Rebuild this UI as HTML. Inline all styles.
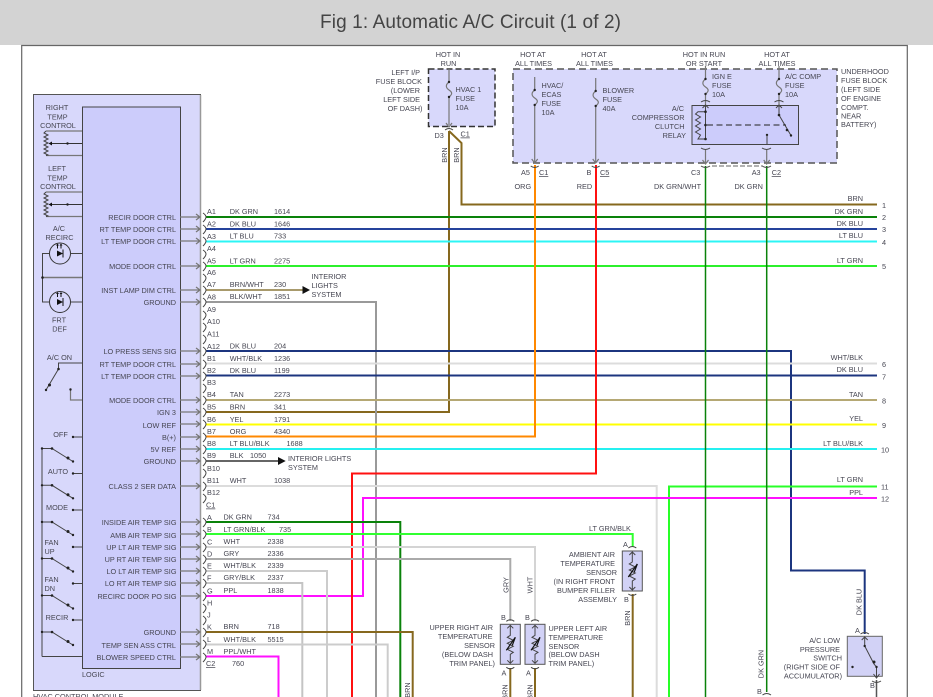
<!DOCTYPE html>
<html><head><meta charset="utf-8"><style>
html,body{margin:0;padding:0;background:#fff;width:933px;height:697px;overflow:hidden}
svg{display:block;filter:blur(.3px)}
text{font-family:"Liberation Sans",sans-serif;font-size:7.3px;fill:#464652}
.m{text-anchor:middle}.e{text-anchor:end}
.w{fill:none;stroke-width:2}
.l{fill:none;stroke:#444;stroke-width:1}
.g{fill:none;stroke:#777;stroke-width:1.2}
.d{fill:#222}
</style></head><body>
<svg width="933" height="697" viewBox="0 0 933 697" xmlns="http://www.w3.org/2000/svg">
<defs>
<g id="c"><path class="g" d="M-23 0H-4M-7-3L-3 0-7 3"/><path class="l" d="M0-4Q3-2 3 0T0 5" stroke="#555"/></g>
<path id="k" class="l" d="M-3-4Q0-2 0 0T-3 5"/>
<g id="fu"><path class="g" d="M0 0V13C-4 16-3 19 0 21S4 25 0 28V41"/><circle cx="0" cy="13" r="1.2" class="d"/><circle cx="0" cy="28" r="1.2" class="d"/></g>
<g id="sw"><path class="l" d="M0 0H10L26 10 31 13"/><circle cx="10" cy="0" r="1.3" class="d"/><circle cx="26" cy="9.5" r="1.5" class="d"/><circle cx="31" cy="13" r="1.2" class="d"/><circle cx="0" cy="0" r="1.2" class="d"/></g>
<g id="ts"><rect x="-10" y="0" width="20" height="40" fill="#d2d2f6" stroke="#555" stroke-width="1"/><path class="l" d="M0 1V11L-3 13 3 16-3 19 3 22-3 25 3 28 0 30V39M-3 4L0 1 3 4M-3 36L0 39 3 36"/><path d="M-4 26L5 13" stroke="#111" stroke-width="1.2"/><path d="M5 13L2 21" stroke="#111" stroke-width="1.2"/><path class="l" d="M-4-3Q0-6 4-3M-4 43Q0 46 4 43"/></g>
<g id="led"><circle r="10.5" fill="none" stroke="#333" stroke-width="1"/><path d="M-3-3V3L3 0Z" fill="#111"/><path d="M3-4V4" stroke="#111"/><path d="M-2.500-5V-9M1-5V-9" stroke="#111"/><path d="M-4-8L-2.500-10-1-8M-.5-8L1-10 2.500-8" fill="#111"/></g>
<g id="pot"><path class="g" d="M46 0H82M46 24.500H82"/><path class="l" d="M46 0L44 2 48 4 44 6 48 8 44 10 48 12 44 14 48 16 44 18 48 20 44 22 48 24 46 24.500"/><path d="M50 12.500H82" stroke="#333"/><path d="M48.500 12.500L52 10.500V14.500Z" fill="#111"/><circle cx="67.500" cy="12.500" r="1.200" class="d"/></g>
</defs>
<rect width="933" height="697" fill="#fff"/>
<rect width="933" height="45" fill="#d3d3d3"/>
<text x="320" y="28" textLength="301" lengthAdjust="spacing" style="font-size:19px;fill:#444">Fig 1: Automatic A/C Circuit (1 of 2)</text>
<path d="M21.700 697V45.500H907.300V697" fill="none" stroke="#666" stroke-width="1.200"/>

<!-- module -->
<rect x="33.500" y="94.500" width="167" height="596" fill="#d8d8fb" stroke="#555" stroke-width="1"/>
<path d="M200.500 95V690" stroke="#999" stroke-width="1.500"/>
<rect x="82.500" y="107" width="98" height="561.500" fill="#ccccfb" stroke="#444" stroke-width="1"/>

<!-- fuse blocks -->
<rect x="428.500" y="69" width="66.500" height="57.500" fill="#d8d8fb" stroke="#333" stroke-width="1.500" stroke-dasharray="6 3"/>
<rect x="513" y="69" width="324" height="94" fill="#d8d8fb" stroke="#555" stroke-width="1.500" stroke-dasharray="7 4"/>
<rect x="692" y="105.500" width="106.500" height="39" fill="#ccccfb" stroke="#444" stroke-width="1"/>

<!-- wires -->
<g class="w">
<path stroke="#86681e" d="M449 131V412H206M449 131L461.500 143V204.500H877"/>
<path stroke="#0a820a" d="M206 217H877"/>
<path stroke="#25439c" d="M206 229H877"/>
<path stroke="#2cf5f5" d="M206 241.500H877"/>
<path stroke="#2cf02c" d="M206 266H877"/>
<path stroke="#a89a6c" d="M206 290H303"/>
<path stroke="#999" d="M206 302H376V697"/>
<path stroke="#1c357f" d="M206 351H791V570.500H864.700V634"/>
<path stroke="#dcdcdc" d="M206 363.500H877"/>
<path stroke="#1c357f" d="M206 375.500H877"/>
<path stroke="#b5a874" d="M206 400H877"/>
<path stroke="#ffff00" d="M206 424.500H877"/>
<path stroke="#ff8800" d="M206 436.500H535V165"/>
<path stroke="#25f0f0" d="M206 449H877"/>
<path stroke="#666" d="M206 461H280"/>
<path stroke="#dcdcdc" d="M206 486H656.700V697"/>
<path stroke="#28ff28" d="M669 697V486.500H877"/>
<path stroke="#ff10ff" d="M206 596H363V498H877"/>
<path stroke="#ff1010" d="M352 697V473.500H596V165"/>
<path stroke="#0a820a" d="M206 522H400.300V697"/>
<path stroke="#30ff30" d="M206 534H632.700V547"/>
<path stroke="#d4d4d4" d="M206 547H535V621"/>
<path stroke="#aaa" d="M206 559H510.300V621"/>
<path stroke="#ccc" d="M206 571H327V697"/>
<path stroke="#c4c4c4" d="M206 583H302.300V697"/>
<path stroke="#86681e" d="M206 632H412.700V697"/>
<path stroke="#ccc" d="M206 644.500H387.700V697"/>
<path stroke="#ff10ff" d="M206 656.500H278.500V697"/>
<path stroke="#86681e" d="M632.700 594V697M510.300 668V697M535 668V697"/>
<path stroke="#0a820a" stroke-width="1.500" d="M705.500 166V697M766.700 166V692"/>
<path stroke="#555" stroke-width="1.500" d="M876.500 680V697"/>
</g>
<path d="M302.500 286L310 290 302.500 294ZM278 457L285.700 461 278 465Z" fill="#111"/>

<!-- pin connectors -->
<use href="#c" x="203" y="217"/><use href="#c" x="203" y="229"/><use href="#c" x="203" y="241"/><use href="#k" x="206" y="254"/><use href="#c" x="203" y="266"/><use href="#k" x="206" y="278"/><use href="#c" x="203" y="290"/><use href="#c" x="203" y="302"/><use href="#k" x="206" y="315"/><use href="#k" x="206" y="327"/><use href="#k" x="206" y="339"/><use href="#c" x="203" y="351"/><use href="#c" x="203" y="364"/><use href="#c" x="203" y="376"/><use href="#k" x="206" y="388"/><use href="#c" x="203" y="400"/><use href="#c" x="203" y="412"/><use href="#c" x="203" y="424"/><use href="#c" x="203" y="437"/><use href="#c" x="203" y="449"/><use href="#c" x="203" y="461"/><use href="#k" x="206" y="473"/><use href="#c" x="203" y="486"/><use href="#k" x="206" y="498"/><use href="#c" x="203" y="522"/><use href="#c" x="203" y="534"/><use href="#c" x="203" y="547"/><use href="#c" x="203" y="559"/><use href="#c" x="203" y="571"/><use href="#c" x="203" y="583"/><use href="#c" x="203" y="596"/><use href="#k" x="206" y="608"/><use href="#k" x="206" y="620"/><use href="#c" x="203" y="632"/><use href="#c" x="203" y="644"/><use href="#c" x="203" y="657"/>

<!-- left controls -->
<use href="#pot" x="0" y="131"/><use href="#pot" x="0" y="192"/>
<use href="#led" x="60" y="253.500"/><use href="#led" x="60" y="302"/>
<path class="l" d="M49.500 253.500H42.500V302H49.500M70.500 253.500H82M70.500 302H82"/>
<path d="M42.500 277.500H82" stroke="#777" stroke-width="1.500"/><circle cx="42.500" cy="277.500" r="1.300" class="d"/>
<path class="l" d="M82 363H58.500V369L46 390"/><circle cx="58.500" cy="369" r="1.300" class="d"/><circle cx="49.500" cy="385" r="1.500" class="d"/><circle cx="46" cy="390" r="1.200" class="d"/>
<path class="g" d="M70.500 389.500V400H82"/><circle cx="70.500" cy="389.500" r="1.200" class="d"/>
<path class="l" d="M42 656.500V448.500H52"/><path class="l" d="M42 656.500H82"/>
<use href="#sw" x="42" y="448.500"/><use href="#sw" x="42" y="485.300"/><use href="#sw" x="42" y="522"/><use href="#sw" x="42" y="558.500"/><use href="#sw" x="42" y="595.500"/><use href="#sw" x="42" y="632"/>
<path class="l" d="M73 437H82M73 473.500H82M73 510H82M73 547H82M73 583.500H82M73 620H82"/>
<g class="d"><circle cx="73" cy="437" r="1.200"/><circle cx="73" cy="473.500" r="1.200"/><circle cx="73" cy="510" r="1.200"/><circle cx="73" cy="547" r="1.200"/><circle cx="73" cy="583.500" r="1.200"/><circle cx="73" cy="620" r="1.200"/></g>

<!-- fuses -->
<use href="#fu" x="449" y="69"/><path class="g" d="M449 110V125M446 123L449 127 452 123"/><path class="l" d="M445 130Q449 127 453 130"/>
<use href="#fu" x="534.700" y="77"/><path class="g" d="M534.700 118V162M531.700 159L534.700 163 537.700 159"/><path class="l" d="M530.700 166Q534.700 169 538.700 166"/>
<use href="#fu" x="595.700" y="78"/><path class="g" d="M595.700 119V162M592.700 159L595.700 163 598.700 159"/><path class="l" d="M591.700 166Q595.700 169 599.700 166"/>
<use href="#fu" x="705.500" y="66"/><use href="#fu" x="779" y="66"/>
<path class="l" d="M701 102Q705.500 99 710 102M774.500 102Q779 99 783.500 102M701 148Q705.500 151 710 148M762 148Q766.700 151 771 148"/>
<path class="l" d="M705.500 105V140M702.500 108L705.500 105 708.500 108M776 108L779 105 782 108M779 105V115L791 135.500"/>
<path class="l" d="M705.500 111.700H698L695.500 114 700.500 117 695.500 120 700.500 123 695.500 126 700.500 129 695.500 132 700.500 135 698 139H705.500"/>
<path d="M707 125H786" stroke="#222" stroke-width="1" stroke-dasharray="6 3.500"/>
<g class="d"><circle cx="705.500" cy="111.700" r="1.300"/><circle cx="705.500" cy="125" r="1.300"/><circle cx="705.500" cy="139" r="1.300"/><circle cx="779" cy="115" r="1.300"/><circle cx="787" cy="130" r="1.300"/><circle cx="791" cy="135.500" r="1.200"/><circle cx="767" cy="135" r="1.200"/></g>
<path class="l" d="M767 135V145"/>
<path class="g" d="M705.500 150V163M702.500 160L705.500 164 708.500 160M766.700 150V163M763.700 160L766.700 164 769.700 160"/>
<path class="l" d="M701 166Q705.500 169 710 166M762 166Q766.700 169 771 166"/>
<path d="M712 166H763" stroke="#666" stroke-width="1" stroke-dasharray="5 2"/>

<!-- sensors -->
<use href="#ts" x="632.300" y="551"/><use href="#ts" x="510.300" y="624.300"/><use href="#ts" x="535" y="624.300"/>
<rect x="847.300" y="636.300" width="35" height="40" fill="#d2d2f6" stroke="#666"/>
<path class="l" d="M860.500 634Q864.700 631 869 634M861.700 640L864.700 637 867.700 640M864.700 637V646L874 664 876.500 667V677M873.500 674L876.500 678 879.500 674M872 681Q876.500 684 881 681"/>
<g class="d"><circle cx="864.700" cy="646" r="1.200"/><circle cx="874" cy="662" r="1.500"/><circle cx="876.500" cy="667" r="1.200"/><circle cx="852.500" cy="667" r="1.200"/></g>
<path class="l" d="M762.500 695Q766.700 692 771 695"/>

<!-- text: pin labels -->
<text x="207" y="214">A1</text><text x="207" y="226.500">A2</text><text x="207" y="239">A3</text><text x="207" y="251">A4</text><text x="207" y="263.500">A5</text><text x="207" y="275">A6</text><text x="207" y="287">A7</text><text x="207" y="299.500">A8</text><text x="207" y="312">A9</text><text x="207" y="324">A10</text><text x="207" y="336.500">A11</text><text x="207" y="349">A12</text><text x="207" y="361">B1</text><text x="207" y="373">B2</text><text x="207" y="385">B3</text><text x="207" y="397">B4</text><text x="207" y="409.500">B5</text><text x="207" y="422">B6</text><text x="207" y="434">B7</text><text x="207" y="446">B8</text><text x="207" y="458">B9</text><text x="207" y="471">B10</text><text x="207" y="483">B11</text><text x="207" y="495">B12</text><text x="206" y="507.500" text-decoration="underline">C1</text><text x="207" y="520">A</text><text x="207" y="532">B</text><text x="207" y="544.500">C</text><text x="207" y="556.500">D</text><text x="207" y="568.500">E</text><text x="207" y="580.500">F</text><text x="207" y="593.500">G</text><text x="207" y="605.500">H</text><text x="207" y="617.500">J</text><text x="207" y="629.500">K</text><text x="207" y="642">L</text><text x="207" y="654">M</text><text x="206" y="666" text-decoration="underline">C2</text>

<!-- wire names -->
<text x="229.700" y="214">DK GRN</text><text x="274" y="214">1614</text>
<text x="229.700" y="226.500">DK BLU</text><text x="274" y="226.500">1646</text>
<text x="229.700" y="238.500">LT BLU</text><text x="274" y="238.500">733</text>
<text x="229.700" y="263.500">LT GRN</text><text x="274" y="263.500">2275</text>
<text x="229.700" y="287">BRN/WHT</text><text x="274" y="287">230</text>
<text x="229.700" y="299">BLK/WHT</text><text x="274" y="299">1851</text>
<text x="229.700" y="348.500">DK BLU</text><text x="274" y="348.500">204</text>
<text x="229.700" y="361">WHT/BLK</text><text x="274" y="361">1236</text>
<text x="229.700" y="373">DK BLU</text><text x="274" y="373">1199</text>
<text x="229.700" y="397">TAN</text><text x="274" y="397">2273</text>
<text x="229.700" y="409.500">BRN</text><text x="274" y="409.500">341</text>
<text x="229.700" y="422">YEL</text><text x="274" y="422">1791</text>
<text x="229.700" y="434">ORG</text><text x="274" y="434">4340</text>
<text x="229.700" y="446">LT BLU/BLK</text><text x="286.500" y="446">1688</text>
<text x="229.700" y="458">BLK</text><text x="250" y="458">1050</text>
<text x="229.700" y="483">WHT</text><text x="274" y="483">1038</text>
<text x="223.500" y="519.500">DK GRN</text><text x="267.500" y="519.500">734</text>
<text x="223.500" y="532">LT GRN/BLK</text><text x="279" y="532">735</text>
<text x="223.500" y="544">WHT</text><text x="267.500" y="544">2338</text>
<text x="223.500" y="556">GRY</text><text x="267.500" y="556">2336</text>
<text x="223.500" y="568">WHT/BLK</text><text x="267.500" y="568">2339</text>
<text x="223.500" y="580">GRY/BLK</text><text x="267.500" y="580">2337</text>
<text x="223.500" y="593">PPL</text><text x="267.500" y="593">1838</text>
<text x="223.500" y="629">BRN</text><text x="267.500" y="629">718</text>
<text x="223.500" y="642">WHT/BLK</text><text x="267.500" y="642">5515</text>
<text x="223.500" y="654">PPL/WHT</text><text x="232" y="666">760</text>

<!-- inner labels -->
<g class="e">
<text class="e" x="176" y="220">RECIR DOOR CTRL</text><text class="e" x="176" y="232">RT TEMP DOOR CTRL</text><text class="e" x="176" y="244">LT TEMP DOOR CTRL</text><text class="e" x="176" y="269">MODE DOOR CTRL</text><text class="e" x="176" y="293">INST LAMP DIM CTRL</text><text class="e" x="176" y="305">GROUND</text><text class="e" x="176.500" y="354">LO PRESS SENS SIG</text><text class="e" x="176" y="367">RT TEMP DOOR CTRL</text><text class="e" x="176" y="379">LT TEMP DOOR CTRL</text><text class="e" x="176" y="403">MODE DOOR CTRL</text><text class="e" x="176" y="415">IGN 3</text><text class="e" x="176" y="428">LOW REF</text><text class="e" x="176" y="440">B(+)</text><text class="e" x="176" y="452">5V REF</text><text class="e" x="176" y="464">GROUND</text><text class="e" x="176" y="489">CLASS 2 SER DATA</text><text class="e" x="176.500" y="525">INSIDE AIR TEMP SIG</text><text class="e" x="176.500" y="538">AMB AIR TEMP SIG</text><text class="e" x="176.500" y="550">UP LT AIR TEMP SIG</text><text class="e" x="176.500" y="562">UP RT AIR TEMP SIG</text><text class="e" x="176.500" y="574">LO LT AIR TEMP SIG</text><text class="e" x="176.500" y="586">LO RT AIR TEMP SIG</text><text class="e" x="176.500" y="599">RECIRC DOOR PO SIG</text><text class="e" x="176" y="635">GROUND</text><text class="e" x="176" y="648">TEMP SEN ASS CTRL</text><text class="e" x="176" y="660">BLOWER SPEED CTRL</text>
</g>

<!-- left labels -->
<text class="m" x="57" y="110">RIGHT</text><text class="m" x="57.500" y="119.500">TEMP</text><text class="m" x="58" y="128">CONTROL</text>
<text class="m" x="57" y="171">LEFT</text><text class="m" x="57.500" y="180.500">TEMP</text><text class="m" x="58" y="189">CONTROL</text>
<text class="m" x="59" y="231">A/C</text><text class="m" x="59.500" y="240">RECIRC</text>
<text class="m" x="59" y="322.500">FRT</text><text class="m" x="59.500" y="331.500">DEF</text>
<text class="m" x="59.500" y="360">A/C ON</text><text class="m" x="60.500" y="437">OFF</text><text class="m" x="58" y="474">AUTO</text><text class="m" x="57" y="510">MODE</text>
<text x="44.500" y="545">FAN</text><text x="44.500" y="554">UP</text><text x="44.500" y="582">FAN</text><text x="44.500" y="591">DN</text><text class="m" x="57" y="620">RECIR</text>
<text x="82" y="677">LOGIC</text><text x="33" y="699">HVAC CONTROL MODULE</text>

<!-- interior -->
<text x="311.500" y="279">INTERIOR</text><text x="311.500" y="288">LIGHTS</text><text x="311.500" y="297">SYSTEM</text>
<text x="288" y="461">INTERIOR LIGHTS</text><text x="288" y="470">SYSTEM</text>

<!-- top labels -->
<text class="m" x="448" y="57">HOT IN</text><text class="m" x="448.500" y="66">RUN</text>
<text class="m" x="533" y="57">HOT AT</text><text class="m" x="533.500" y="66">ALL TIMES</text>
<text class="m" x="594" y="57">HOT AT</text><text class="m" x="594.500" y="66">ALL TIMES</text>
<text class="m" x="704" y="57">HOT IN RUN</text><text class="m" x="704" y="66">OR START</text>
<text class="m" x="777" y="57">HOT AT</text><text class="m" x="777" y="66">ALL TIMES</text>
<text class="e" x="420" y="75">LEFT I/P</text><text class="e" x="422" y="84">FUSE BLOCK</text><text class="e" x="420" y="93">(LOWER</text><text class="e" x="420" y="102">LEFT SIDE</text><text class="e" x="422.500" y="111">OF DASH)</text>
<text x="455.500" y="92">HVAC 1</text><text x="455.500" y="101">FUSE</text><text x="455.500" y="110">10A</text>
<text x="541.500" y="88">HVAC/</text><text x="541.500" y="97">ECAS</text><text x="541.500" y="106">FUSE</text><text x="541.500" y="115">10A</text>
<text x="602.500" y="93">BLOWER</text><text x="602.500" y="102">FUSE</text><text x="602.500" y="111">40A</text>
<text x="712" y="79">IGN E</text><text x="712" y="88">FUSE</text><text x="712" y="97">10A</text>
<text x="785" y="79">A/C COMP</text><text x="785" y="88">FUSE</text><text x="785" y="97">10A</text>
<text class="e" x="684" y="111">A/C</text><text class="e" x="684.500" y="120">COMPRESSOR</text><text class="e" x="684.500" y="129">CLUTCH</text><text class="e" x="686" y="138">RELAY</text>
<text x="841" y="74">UNDERHOOD</text><text x="841" y="83">FUSE BLOCK</text><text x="841" y="92">(LEFT SIDE</text><text x="841" y="101">OF ENGINE</text><text x="841" y="110">COMPT.</text><text x="841" y="118.500">NEAR</text><text x="841" y="127">BATTERY)</text>
<text x="434.500" y="138">D3</text><text x="460.500" y="136.500" text-decoration="underline">C1</text>
<text x="521" y="175">A5</text><text x="539" y="175" text-decoration="underline">C1</text><text x="586.500" y="175">B</text><text x="600" y="175" text-decoration="underline">C5</text>
<text x="691" y="175">C3</text><text x="751.700" y="175">A3</text><text x="771.700" y="175" text-decoration="underline">C2</text>
<text x="514.500" y="189">ORG</text><text x="576.700" y="189">RED</text><text x="654" y="189">DK GRN/WHT</text><text x="734.500" y="189">DK GRN</text>

<!-- right wire labels -->
<text class="e" x="863" y="201">BRN</text><text class="e" x="863" y="214">DK GRN</text><text class="e" x="863" y="226">DK BLU</text><text class="e" x="863" y="238">LT BLU</text><text class="e" x="863" y="263">LT GRN</text><text class="e" x="863" y="360">WHT/BLK</text><text class="e" x="863" y="372">DK BLU</text><text class="e" x="863" y="397">TAN</text><text class="e" x="863" y="421">YEL</text><text class="e" x="863" y="446">LT BLU/BLK</text><text class="e" x="863" y="482">LT GRN</text><text class="e" x="863" y="495">PPL</text>
<text x="882" y="208">1</text><text x="882" y="220">2</text><text x="882" y="232">3</text><text x="882" y="245">4</text><text x="882" y="269">5</text><text x="882" y="367">6</text><text x="882" y="379.500">7</text><text x="882" y="403.500">8</text><text x="882" y="428">9</text><text x="881" y="452.500">10</text><text x="881" y="489.500">11</text><text x="881" y="501.500">12</text>

<!-- rotated -->
<text class="m" transform="rotate(-90 447 155)" x="447" y="155">BRN</text>
<text class="m" transform="rotate(-90 459 155)" x="459" y="155">BRN</text>
<text class="m" transform="rotate(-90 508.500 585)" x="508.500" y="585">GRY</text>
<text class="m" transform="rotate(-90 532.500 585)" x="532.500" y="585">WHT</text>
<text class="m" transform="rotate(-90 630 618)" x="630" y="618">BRN</text>
<text class="m" transform="rotate(-90 410 690)" x="410" y="690">BRN</text>
<text class="m" transform="rotate(-90 507.500 692)" x="507.500" y="692">BRN</text>
<text class="m" transform="rotate(-90 532.500 692)" x="532.500" y="692">BRN</text>
<text class="m" transform="rotate(-90 763.500 664)" x="763.500" y="664">DK GRN</text>
<text class="m" transform="rotate(-90 861.500 602)" x="861.500" y="602">DK BLU</text>

<!-- right sensors text -->
<text x="624" y="602">B</text><text x="623" y="547">A</text>
<text x="589" y="531">LT GRN/BLK</text>
<text class="e" x="615" y="557">AMBIENT AIR</text><text class="e" x="615" y="566">TEMPERATURE</text><text class="e" x="617" y="575">SENSOR</text><text class="e" x="615" y="584">(IN RIGHT FRONT</text><text class="e" x="615" y="593">BUMPER FILLER</text><text class="e" x="617" y="602">ASSEMBLY</text>
<text x="501" y="620">B</text><text x="525" y="620">B</text><text x="501.500" y="675.500">A</text><text x="526" y="675.500">A</text>
<text class="e" x="493" y="630">UPPER RIGHT AIR</text><text class="e" x="492.500" y="639">TEMPERATURE</text><text class="e" x="495" y="648">SENSOR</text><text class="e" x="493" y="657">(BELOW DASH</text><text class="e" x="495" y="666">TRIM PANEL)</text>
<text x="548.500" y="631">UPPER LEFT AIR</text><text x="548.500" y="640">TEMPERATURE</text><text x="548.500" y="649">SENSOR</text><text x="548.500" y="657">(BELOW DASH</text><text x="548.500" y="666">TRIM PANEL)</text>
<text x="855" y="633">A</text><text x="870" y="688">B</text><text x="757" y="694">B</text>
<text class="e" x="840" y="643">A/C LOW</text><text class="e" x="840" y="652">PRESSURE</text><text class="e" x="842" y="660.500">SWITCH</text><text class="e" x="840" y="669.500">(RIGHT SIDE OF</text><text class="e" x="842" y="678.500">ACCUMULATOR)</text>
</svg>
</body></html>
